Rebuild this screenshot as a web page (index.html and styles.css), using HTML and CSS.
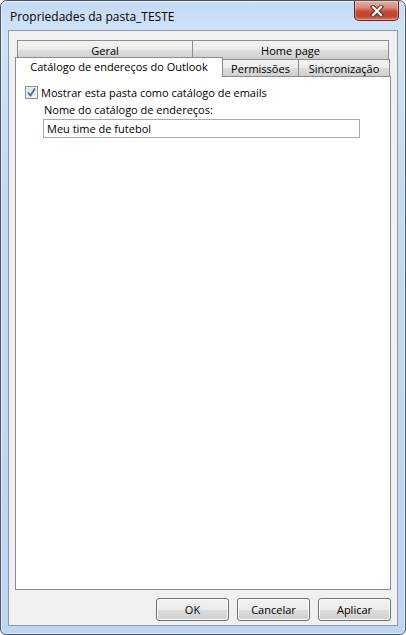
FILE: index.html
```html
<!DOCTYPE html>
<html lang="pt">
<head>
<meta charset="utf-8">
<title>Propriedades da pasta_TESTE</title>
<link rel="stylesheet" href="styles.css">
</head>
<body>
<div class="window">
  <div class="titlebar">
    <span class="title">Propriedades da pasta_TESTE</span>
    <button class="close" aria-label="Fechar">
      <svg width="16" height="12" viewBox="0 0 16 12">
        <path d="M4 2 L12 10 M12 2 L4 10" stroke="#4a3230" stroke-width="4.4" stroke-linecap="square" fill="none"/>
        <path d="M4 2 L12 10 M12 2 L4 10" stroke="#f4f2f2" stroke-width="2.4" stroke-linecap="square" fill="none"/>
      </svg>
    </button>
  </div>
  <div class="client">
    <div class="tabs">
      <div class="row row1">
        <div class="tab t-geral">Geral</div>
        <div class="tab t-home">Home page</div>
      </div>
      <div class="row row2">
        <div class="tab selected t-cat">Catálogo de endereços do Outlook</div>
        <div class="tab t-perm">Permissões</div>
        <div class="tab t-sinc">Sincronização</div>
      </div>
    </div>
    <div class="panel">
      <label class="check-line">
        <span class="checkbox">
          <svg width="11" height="11" viewBox="0 0 11 11"><path d="M2 5.5 L4.5 8.5 L9 1.5" stroke="#4f68a8" stroke-width="1.8" fill="none"/></svg>
        </span>
        <span>Mostrar esta pasta como catálogo de emails</span>
      </label>
      <div class="field-label">Nome do catálogo de endereços:</div>
      <div class="input">Meu time de futebol</div>
    </div>
    <div class="buttons">
      <button class="btn">OK</button>
      <button class="btn">Cancelar</button>
      <button class="btn">Aplicar</button>
    </div>
  </div>
</div>
</body>
</html>
```
FILE: styles.css
```css
* { box-sizing: border-box; }
html, body { margin: 0; padding: 0; }
body {
  width: 406px;
  height: 635px;
  font-family: "Open Sans", "Noto Sans", sans-serif;
  font-size: 11px;
  color: #000;
  background: #fff;
}
.window {
  width: 406px;
  height: 635px;
  border: 1px solid #4b5766;
  border-radius: 7px 7px 6px 6px;
  background: linear-gradient(180deg, #c4dbf3 0%, #cfe3f8 5%, #c3daf3 30%, #bdd6f1 100%);
  box-shadow: inset 0 0 0 1px rgba(255,255,255,0.55);
  display: flex;
  flex-direction: column;
  padding: 0 7px 8px 7px;
}
.titlebar {
  height: 29px;
  display: flex;
  align-items: flex-start;
  justify-content: space-between;
}
.title {
  margin-top: 8px;
  margin-left: 2px;
  font-size: 12px;
  line-height: 16px;
}
.close {
  width: 45px;
  height: 20px;
  margin: 0 -1px 0 0;
  padding: 0;
  border: 1px solid #5b2a22;
  border-top: 0;
  border-radius: 0 0 5px 5px;
  background: linear-gradient(180deg, #e9ada2 0%, #dc8a78 35%, #c84a33 55%, #c04530 80%, #d17764 100%);
  box-shadow: inset 0 0 0 1px rgba(255,255,255,0.35);
  display: flex;
  align-items: center;
  justify-content: center;
}
.client {
  flex: 1;
  background: #f0f0f0;
  border: 1px solid #8a9bb0;
  padding: 9px 6px 4px 6px;
  display: flex;
  flex-direction: column;
}
.tabs { display: flex; flex-direction: column; }
.row { display: flex; }
.row1 { height: 19px; margin: 0 2px; }
.row2 { height: 17px; align-items: flex-start; }
.tab {
  border: 1px solid #898c95;
  border-bottom: 0;
  background: linear-gradient(180deg, #f3f3f3 0%, #ebebeb 50%, #dddddd 52%, #cfcfcf 100%);
  text-align: center;
  line-height: 17px;
  white-space: nowrap;
}
.tab + .tab { margin-left: -1px; }
.row1 .tab { height: 19px; line-height: 20px; }
.row2 .tab { height: 17px; }
.t-geral { width: 176px; }
.t-home { width: 197px; }
.t-cat { width: 208px; }
.t-perm { width: 77px; }
.t-sinc { width: 92px; }
.row2 .tab.selected {
  position: relative;
  z-index: 1;
  height: 20px;
  margin-top: -2px;
  background: #fff;
  line-height: 17px;
}
.panel {
  flex: 1;
  background: #fff;
  border: 1px solid #898c95;
  padding: 8px 9px 0 9px;
}
.check-line {
  display: flex;
  align-items: center;
  gap: 3px;
  height: 14px;
}
.checkbox {
  width: 13px;
  height: 13px;
  border: 1px solid #8e8f8f;
  background: linear-gradient(135deg, #dcdcdc 0%, #f6f6f6 100%);
  box-shadow: inset 0 0 0 1px #f4f4f4;
  display: flex;
  align-items: center;
  justify-content: center;
}
.field-label {
  margin: 3px 0 0 19px;
  line-height: 16px;
}
.input {
  margin: 1px 0 0 18px;
  width: 317px;
  height: 19px;
  border: 1px solid #ababab;
  padding-left: 3px;
  line-height: 17px;
}
.buttons {
  display: flex;
  justify-content: flex-end;
  gap: 8px;
  margin-top: 8px;
}
.btn {
  width: 73px;
  height: 23px;
  padding: 0;
  font: inherit;
  color: #000;
  border: 1px solid #707070;
  border-radius: 3px;
  background: linear-gradient(180deg, #f2f2f2 0%, #ebebeb 50%, #dddddd 51%, #cfcfcf 100%);
  box-shadow: inset 0 0 0 1px #fcfcfc;
}
```
